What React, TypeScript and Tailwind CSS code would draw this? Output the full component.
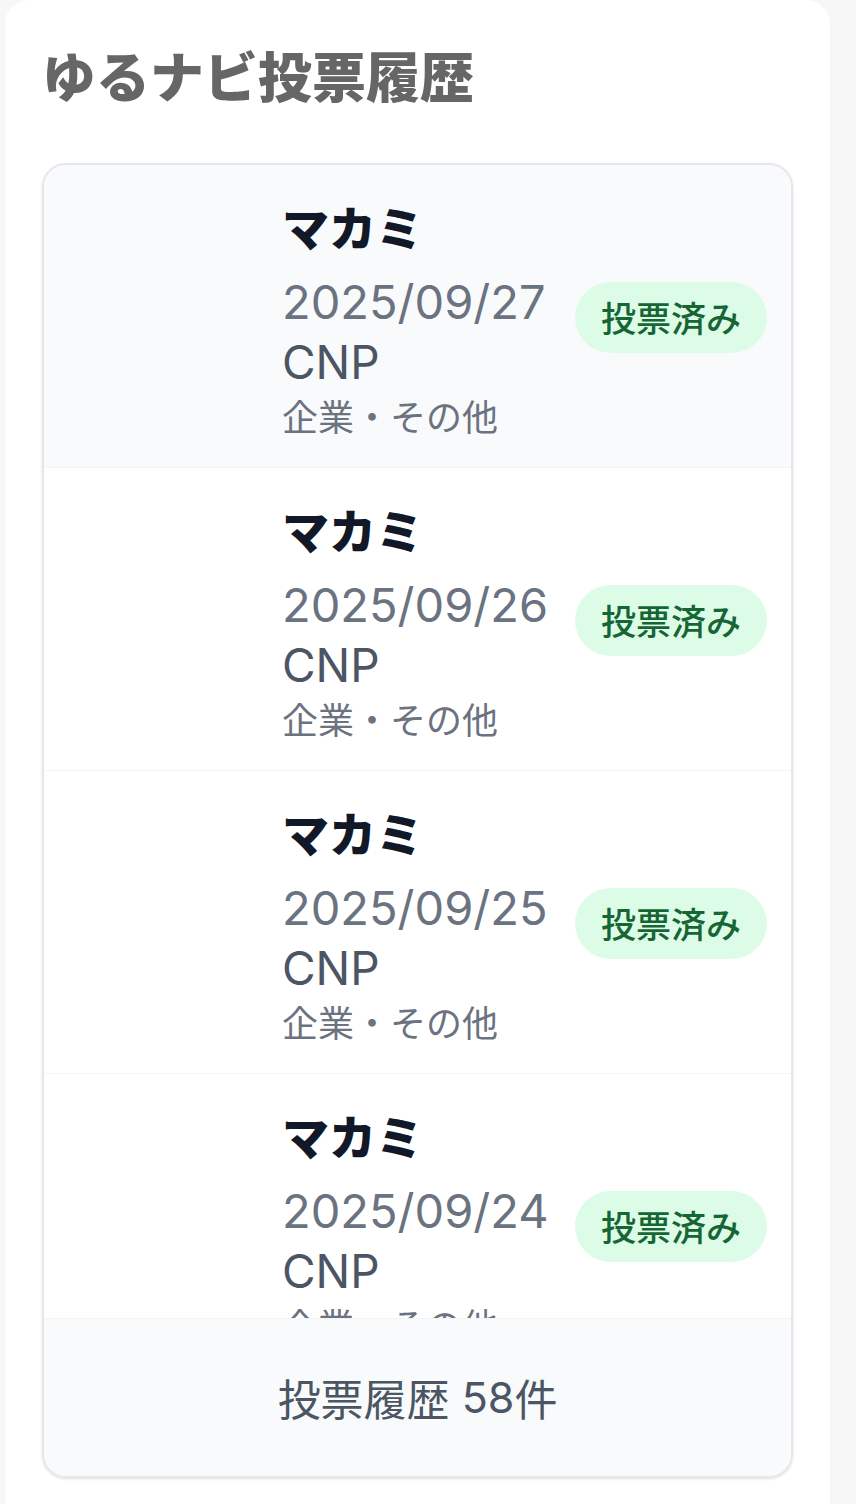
import React from "react";

const items = [
  { date: "2025/09/27", active: true },
  { date: "2025/09/26", active: false },
  { date: "2025/09/25", active: false },
  { date: "2025/09/24", active: false },
];

const latin = { fontFamily: 'Inter, "Noto Sans CJK JP", sans-serif' };
const jp = { fontFamily: '"Noto Sans CJK JP", Inter, sans-serif' };

export default function App() {
  return (
    <div className="min-h-[1504px] w-[856px] bg-[#f7f7f7]" style={jp}>
      <div className="ml-[5px] w-[825px] min-h-[1504px] rounded-t-[24px] bg-white pl-[37px] pt-[40px]">
        <h1 className="text-[54px] leading-[70px] font-black text-[#666666]">
          ゆるナビ投票履歴
        </h1>
        <div className="mt-[53px] w-[751px] overflow-hidden rounded-[24px] border-2 border-[#e5e7eb] shadow-sm">
          <div className="h-[1153px] overflow-hidden">
            {items.map((it) => (
              <div
                key={it.date}
                className={`flex items-center border-b border-[#f3f4f6] pl-[238px] pr-[24px] pt-[32px] pb-[29px] ${
                  it.active ? "bg-[#f9fafb]" : "bg-white"
                }`}
              >
                <div className="flex flex-1 flex-col">
                  <div className="text-[47px] leading-[58px] font-black text-[#111827] mb-[16px]">
                    マカミ
                  </div>
                  <div className="text-[47px] leading-[61px] text-[#6b7280]" style={latin}>
                    {it.date}
                  </div>
                  <div className="text-[46px] leading-[61px] text-[#4b5563]" style={latin}>
                    CNP
                  </div>
                  <div className="text-[36px] leading-[45px] text-[#6b7280]">企業・その他</div>
                </div>
                <div className="ml-[24px] flex h-[71px] w-[192px] items-center justify-center rounded-full bg-[#dcfce7] text-[35px] font-medium text-[#166534]">
                  投票済み
                </div>
              </div>
            ))}
          </div>
          <div className="flex h-[158px] items-center justify-center border-t border-[#f3f4f6] bg-[#f9fafb] text-[43px] text-[#4b5563]">
            投票履歴 <span style={latin} className="ml-[12px]">58</span>件
          </div>
        </div>
      </div>
    </div>
  );
}
